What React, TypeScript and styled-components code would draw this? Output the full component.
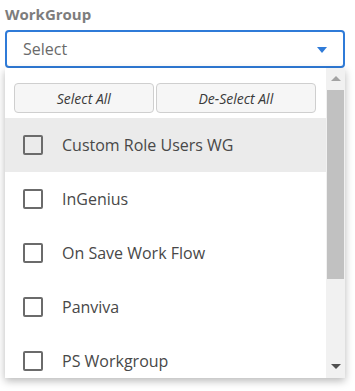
import React from "react";
import styled, { createGlobalStyle } from "styled-components";

const GlobalStyle = createGlobalStyle`
  html, body {
    margin: 0;
    padding: 0;
    background: #ffffff;
    font-family: "Open Sans", "Noto Sans", sans-serif;
  }
`;

const Page = styled.div`
  width: 355px;
  height: 391px;
  padding: 4px 10px 0 5px;
  box-sizing: border-box;
  overflow: hidden;
`;

const Label = styled.div`
  font-size: 15px;
  line-height: 20px;
  font-weight: 700;
  color: #7d7d7d;
  margin-bottom: 6px;
`;

const Field = styled.div`
  position: relative;
`;

const SelectBox = styled.div`
  height: 38px;
  box-sizing: border-box;
  border: 2px solid #2f7bd8;
  border-radius: 4px;
  display: flex;
  align-items: center;
  justify-content: space-between;
  padding: 0 16px 0 16px;
  font-size: 16px;
  color: #6a6a6a;
`;

const Caret = styled.span`
  width: 0;
  height: 0;
  border-left: 5px solid transparent;
  border-right: 5px solid transparent;
  border-top: 6px solid #2f7bd8;
  margin-top: 1px;
`;

const Menu = styled.div`
  position: absolute;
  top: 100%;
  left: 0;
  width: 340px;
  height: 310px;
  background: #ffffff;
  box-shadow: 0 3px 8px rgba(0, 0, 0, 0.28);
  display: flex;
  overflow: hidden;
`;

const List = styled.div`
  flex: 1;
  overflow: hidden;
`;

const Actions = styled.div`
  display: flex;
  gap: 2px;
  padding: 15px 10px 5px 9px;
`;

const ActionButton = styled.button<{ $grow: number }>`
  flex: ${({ $grow }) => $grow};
  height: 30px;
  border: 1px solid #cfcfcf;
  border-radius: 4px;
  background: #f6f6f6;
  font-family: "Open Sans", "Noto Sans", sans-serif;
  font-style: italic;
  font-weight: 400;
  font-size: 14px;
  color: #3a3a3a;
  padding: 0;
`;

const Option = styled.div<{ $active?: boolean }>`
  height: 54px;
  display: flex;
  align-items: center;
  gap: 19px;
  padding-left: 18px;
  background: ${({ $active }) => ($active ? "#ebebeb" : "transparent")};
  font-size: 16px;
  color: #484848;
`;

const Checkbox = styled.span`
  width: 20px;
  height: 20px;
  box-sizing: border-box;
  border: 2px solid #6b6b6b;
  border-radius: 2px;
  flex-shrink: 0;
`;

const Scrollbar = styled.div`
  width: 19px;
  background: #f1f1f1;
  display: flex;
  flex-direction: column;
  align-items: center;
`;

const Arrow = styled.span<{ $up?: boolean }>`
  width: 0;
  height: 0;
  border-left: 5px solid transparent;
  border-right: 5px solid transparent;
  ${({ $up }) =>
    $up
      ? "border-bottom: 5px solid #a3a3a3; margin: 8px 0 9px;"
      : "border-top: 5px solid #505050; margin: auto 0 9px;"}
`;

const Thumb = styled.div`
  width: 17px;
  height: 189px;
  background: #c1c1c1;
`;

const options = [
  "Custom Role Users WG",
  "InGenius",
  "On Save Work Flow",
  "Panviva",
  "PS Workgroup",
];

export default function App() {
  return (
    <Page>
      <GlobalStyle />
      <Label>WorkGroup</Label>
      <Field>
        <SelectBox>
          Select
          <Caret />
        </SelectBox>
        <Menu>
          <List>
            <Actions>
              <ActionButton $grow={139}>Select All</ActionButton>
              <ActionButton $grow={160}>De-Select All</ActionButton>
            </Actions>
            {options.map((name, i) => (
              <Option key={name} $active={i === 0}>
                <Checkbox />
                {name}
              </Option>
            ))}
          </List>
          <Scrollbar>
            <Arrow $up />
            <Thumb />
            <Arrow />
          </Scrollbar>
        </Menu>
      </Field>
    </Page>
  );
}
